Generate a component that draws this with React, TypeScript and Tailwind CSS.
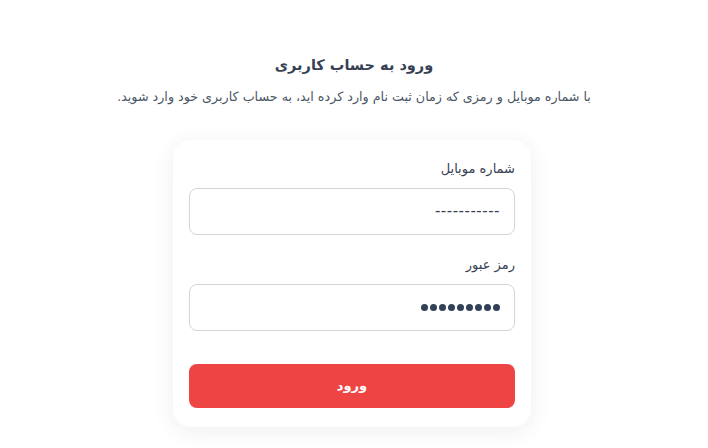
import React from 'react';

export default function App() {
  return (
    <div
      dir="rtl"
      className="min-h-screen bg-white flex flex-col items-center pt-[52px]"
      style={{ fontFamily: '"DejaVu Sans", "Noto Sans", sans-serif' }}
    >
      <h1 className="text-[14.5px] font-bold text-gray-700 leading-[26px]">ورود به حساب کاربری</h1>
      <p className="mt-[9px] text-[12.7px] text-gray-600 leading-[20px]">
        با شماره موبایل و رمزی که زمان ثبت نام وارد کرده اید، به حساب کاربری خود وارد شوید.
      </p>

      <div className="mt-[33px] mr-[4px] w-[358px] bg-white rounded-[18px] shadow-[0_4px_24px_rgba(15,23,42,0.07)] px-4 pt-[19px] pb-[19px]">
        <label className="block text-[13px] text-gray-700 leading-[20px]">شماره موبایل</label>
        <div className="mt-[9px] h-[47px] rounded-lg border border-gray-300 flex items-center px-[14px]">
          <span className="text-[15px] text-gray-700 tracking-[0.5px]">-----------</span>
        </div>

        <label className="block mt-[20px] text-[13px] text-gray-700 leading-[20px]">رمز عبور</label>
        <div className="mt-[9px] h-[47px] rounded-lg border border-gray-300 flex items-center px-[14px]">
          <div className="flex gap-[2px]">
            {Array.from({ length: 9 }).map((_, i) => (
              <span key={i} className="w-[7px] h-[7px] rounded-full bg-slate-700" />
            ))}
          </div>
        </div>

        <button className="mt-[33px] w-full h-[44px] rounded-lg bg-[#ef4444] text-white text-[13px] font-bold">
          ورود
        </button>
      </div>
    </div>
  );
}
